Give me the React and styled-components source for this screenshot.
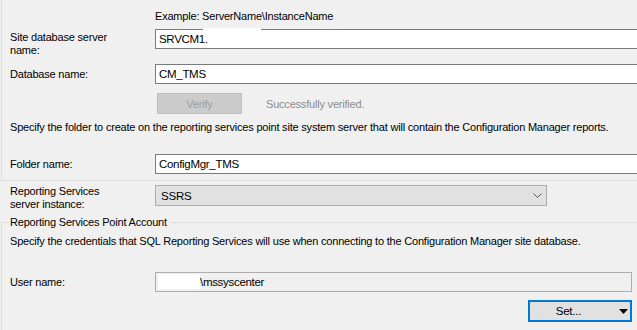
import React from "react";
import styled, { createGlobalStyle } from "styled-components";

const GlobalStyle = createGlobalStyle`
    body {
        margin: 0;
        background: #f0f0f0;
        font-family: "Liberation Sans", Arial, sans-serif;
        font-size: 11px;
        color: #000;
        overflow: hidden;
    }
`;

const Page = styled.div`
    width: 637px;
    height: 330px;
    display: flex;
    flex-direction: column;
    overflow: hidden;
    letter-spacing: -0.2px;
`;

const TopGroup = styled.div`
    margin-left: 1px;
    padding-bottom: 6px;
    border-left: 1px solid #dcdcdc;
    border-bottom: 1px solid #dcdcdc;
    display: flex;
    flex-direction: column;
`;

const Hint = styled.div`
    padding: 9px 0 0 153px;
    line-height: 14px;
`;

const Row = styled.div`
    display: grid;
    grid-template-columns: 145px 1fr;
    align-items: ${(p) => (p.$top ? "start" : "center")};
    margin-top: ${(p) => p.$gap}px;
    padding-left: ${(p) => (p.$inGroup ? 8 : 10)}px;
`;

const Label = styled.div`
    line-height: 13px;
    padding-top: ${(p) => p.$pad || 0}px;
    margin-bottom: ${(p) => p.$overhang || 0}px;
`;

const Input = styled.div`
    position: relative;
    box-sizing: border-box;
    height: 20px;
    margin-right: ${(p) => (p.$closed ? "5px" : "-4px")};
    padding: 0 3px;
    display: flex;
    align-items: center;
    background: ${(p) => (p.$readOnly ? "#f0f0f0" : "#fff")};
    border: 1px solid ${(p) => (p.$readOnly ? "#adadad" : "#7a7a7a")};
    font-size: 11.5px;
    letter-spacing: -0.3px;
    color: #000;
`;

const Redact = styled.span`
    position: absolute;
    left: ${(p) => p.$left}px;
    top: ${(p) => p.$top}px;
    width: ${(p) => p.$width}px;
    height: ${(p) => p.$height}px;
    background: #fff;
`;

const ActionRow = styled.div`
    display: flex;
    align-items: center;
    margin-top: 9px;
    padding-left: 155px;
`;

const DisabledButton = styled.div`
    box-sizing: border-box;
    width: 85px;
    height: 21px;
    display: flex;
    align-items: center;
    justify-content: center;
    background: #cccccc;
    border: 1px solid #bfbfbf;
    color: #9d9d9d;
`;

const Status = styled.span`
    margin-left: 24px;
    color: #8c8c8c;
`;

const Para = styled.div`
    line-height: 14px;
    margin-top: ${(p) => p.$gap}px;
    padding-left: ${(p) => (p.$inGroup ? 8 : 9)}px;
    white-space: nowrap;
`;

const Combo = styled.div`
    box-sizing: border-box;
    width: 392px;
    height: 21px;
    display: flex;
    align-items: center;
    justify-content: space-between;
    padding: 0 4px 0 5px;
    background: #e1e1e1;
    border: 1px solid #adadad;
    font-size: 11.5px;
`;

const Group = styled.div`
    flex: 1;
    margin-top: 9px;
    margin-left: 1px;
    display: flex;
    flex-direction: column;
`;

const Legend = styled.div`
    display: flex;
    align-items: center;
    line-height: 14px;
    &::before {
        content: "";
        width: 8px;
        border-top: 1px solid #dcdcdc;
        margin-right: 1px;
    }
    &::after {
        content: "";
        flex: 1;
        border-top: 1px solid #dcdcdc;
        margin-left: 3px;
    }
`;

const GroupBody = styled.div`
    flex: 1;
    border-left: 1px solid #dcdcdc;
    margin-top: -7px;
    padding-top: 7px;
    display: flex;
    flex-direction: column;
`;

const ButtonRow = styled.div`
    display: flex;
    justify-content: flex-end;
    margin-top: 8px;
    padding-right: 5px;
`;

const SplitButton = styled.div`
    box-sizing: border-box;
    width: 104px;
    height: 22px;
    display: flex;
    align-items: center;
    padding: 0 2px 0 0;
    background: #e1e1e1;
    border: 2px solid #0078d7;
    font-size: 11.5px;
`;

const SplitText = styled.span`
    flex: 1;
    text-align: center;
    padding-right: 12px;
`;

function Chevron() {
    return (
        <svg width="9" height="5" viewBox="0 0 9 5">
            <polyline points="0.5,0.5 4.5,4.5 8.5,0.5" fill="none" stroke="#5a5a5a" strokeWidth="1" />
        </svg>
    );
}

function DownArrow() {
    return (
        <svg width="9" height="5" viewBox="0 0 9 5">
            <polygon points="0,0 9,0 4.5,5" fill="#000" />
        </svg>
    );
}

export default function App() {
    return (
        <>
            <GlobalStyle />
            <Page>
                <TopGroup>
                    <Hint>Example: ServerName\InstanceName</Hint>
                    <Row $gap={6} $top $inGroup>
                        <Label $pad={2} $overhang={-8}>
                            Site database server
                            <br />
                            name:
                        </Label>
                        <Input>
                            SRVCM1.
                            <Redact $left={47} $top={-2} $width={58} $height={12} />
                        </Input>
                    </Row>
                    <Row $gap={15} $inGroup>
                        <Label>Database name:</Label>
                        <Input>CM_TMS</Input>
                    </Row>
                    <ActionRow>
                        <DisabledButton>Verify</DisabledButton>
                        <Status>Successfully verified.</Status>
                    </ActionRow>
                    <Para $gap={6} $inGroup>
                        Specify the folder to create on the reporting services point site system server that will contain the Configuration Manager reports.
                    </Para>
                    <Row $gap={20} $inGroup>
                        <Label>Folder name:</Label>
                        <Input>ConfigMgr_TMS</Input>
                    </Row>
                </TopGroup>
                <Row $gap={4} $top>
                    <Label $overhang={-5}>
                        Reporting Services
                        <br />
                        server instance:
                    </Label>
                    <Combo>
                        SSRS
                        <Chevron />
                    </Combo>
                </Row>
                <Group>
                    <Legend>Reporting Services Point Account</Legend>
                    <GroupBody>
                        <Para $gap={5} $inGroup>
                            Specify the credentials that SQL Reporting Services will use when connecting to the Configuration Manager site database.
                        </Para>
                        <Row $gap={24} $inGroup>
                            <Label>User name:</Label>
                            <Input $readOnly $closed>
                                <Redact $left={2} $top={1} $width={42} $height={15} />
                                <span style={{ paddingLeft: 41 }}>\mssyscenter</span>
                            </Input>
                        </Row>
                        <ButtonRow>
                            <SplitButton>
                                <SplitText>Set...</SplitText>
                                <DownArrow />
                            </SplitButton>
                        </ButtonRow>
                    </GroupBody>
                </Group>
            </Page>
        </>
    );
}
